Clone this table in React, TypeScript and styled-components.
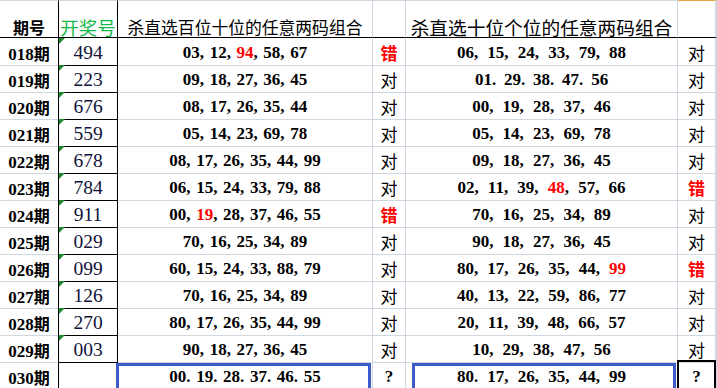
import React from "react";
import styled, { createGlobalStyle, css } from "styled-components";

const GRID = "#cfd7e3";
const NUM = '"Liberation Serif", "Noto Sans CJK SC", serif';
const CJK = '"Noto Sans CJK SC", "Liberation Serif", sans-serif';

const Global = createGlobalStyle`
  html, body { margin: 0; padding: 0; background: #fff; }
  body { overflow: hidden; }
`;

const Sheet = styled.div`
  width: 717px;
  height: 388px;
  overflow: hidden;
  background: #fff;
  color: #000;
`;

const COLS = "59px 59px 255px 33px 272px 38px 1fr";

const HeaderRow = styled.div`
  display: grid;
  grid-template-columns: ${COLS};
  height: 38px;
`;

const Row = styled.div<{ $tall?: boolean }>`
  display: grid;
  grid-template-columns: ${COLS};
  height: ${(p) => (p.$tall ? "40px" : "27px")};
`;

const HeadCell = styled.div<{ $dark?: boolean; $accent?: boolean }>`
  position: relative;
  box-sizing: border-box;
  display: flex;
  align-items: flex-end;
  justify-content: center;
  border-top: 1px solid ${(p) => (p.$accent ? "#f0a33c" : GRID)};
  border-bottom: 1px solid #000;
  border-right: 1px solid ${(p) => (p.$dark ? "#000" : GRID)};
  white-space: nowrap;
  overflow: visible;
`;

const HeadText = styled.span<{ $size: number; $bold?: boolean; $green?: boolean }>`
  font-family: ${CJK};
  font-size: ${(p) => p.$size}px;
  line-height: 20px;
  font-weight: ${(p) => (p.$bold ? 700 : 400)};
  color: ${(p) => (p.$green ? "#12b84a" : "#000")};
`;

const Cell = styled.div<{ $darkRight?: boolean; $darkBottom?: boolean }>`
  position: relative;
  box-sizing: border-box;
  display: flex;
  align-items: flex-start;
  justify-content: center;
  padding-top: 5px;
  border-right: 1px solid ${(p) => (p.$darkRight ? "#000" : GRID)};
  border-bottom: 1px solid ${(p) => (p.$darkBottom ? "#000" : GRID)};
  white-space: nowrap;
`;

const Label = styled.span`
  font-family: ${NUM};
  font-size: 17px;
  font-weight: 700;
  line-height: 20px;
  span {
    font-family: ${CJK};
    font-size: 16px;
  }
`;

const Draw = styled.span`
  font-family: ${NUM};
  font-size: 19.5px;
  line-height: 20px;
  color: #10123a;
`;

const Flag = styled.span`
  position: absolute;
  top: 0;
  left: 0;
  width: 0;
  height: 0;
  border-top: 6px solid #1f8a2e;
  border-right: 6px solid transparent;
`;

const Seq = styled.span`
  font-family: ${NUM};
  font-size: 17px;
  font-weight: 700;
  line-height: 20px;
  display: inline-flex;
`;

const Digits = styled.span<{ $red?: boolean }>`
  color: ${(p) => (p.$red ? "#ff0000" : "#000")};
`;

const Sep = styled.span<{ $w: number }>`
  display: inline-block;
  width: ${(p) => p.$w}em;
`;

const Mark = styled.span<{ $kind: "ok" | "bad" | "q" }>`
  line-height: 20px;
  ${(p) =>
    p.$kind === "q"
      ? css`
          font-family: ${NUM};
          font-size: 17px;
          font-weight: 700;
        `
      : css`
          font-family: ${CJK};
          font-size: 17px;
          font-weight: ${p.$kind === "bad" ? 700 : 400};
          color: ${p.$kind === "bad" ? "#ff0000" : "#000"};
        `}
`;

const Frame = styled.span<{ $l: number; $r: number; $t: number; $c: string; $w: number }>`
  position: absolute;
  left: ${(p) => p.$l}px;
  right: ${(p) => p.$r}px;
  top: ${(p) => p.$t}px;
  bottom: -12px;
  border: ${(p) => p.$w}px solid ${(p) => p.$c};
  pointer-events: none;
`;

type RowData = {
  no: string;
  draw: string;
  a: string;
  aRed?: string;
  aRes: "ok" | "bad" | "q";
  b: string;
  bRed?: string;
  bRes: "ok" | "bad" | "q";
  bSep?: number;
};

const rows: RowData[] = [
  { no: "018", draw: "494", a: "03,12,94,58,67", aRed: "94", aRes: "bad", b: "06,15,24,33,79,88", bRes: "ok" },
  { no: "019", draw: "223", a: "09,18,27,36,45", aRes: "ok", b: "01.29.38.47.56", bRes: "ok", bSep: 0.71 },
  { no: "020", draw: "676", a: "08,17,26,35,44", aRes: "ok", b: "00,19,28,37,46", bRes: "ok" },
  { no: "021", draw: "559", a: "05,14,23,69,78", aRes: "ok", b: "05,14,23,69,78", bRes: "ok" },
  { no: "022", draw: "678", a: "08,17,26,35,44,99", aRes: "ok", b: "09,18,27,36,45", bRes: "ok" },
  { no: "023", draw: "784", a: "06,15,24,33,79,88", aRes: "ok", b: "02,11,39,48,57,66", bRed: "48", bRes: "bad" },
  { no: "024", draw: "911", a: "00,19,28,37,46,55", aRed: "19", aRes: "bad", b: "70,16,25,34,89", bRes: "ok" },
  { no: "025", draw: "029", a: "70,16,25,34,89", aRes: "ok", b: "90,18,27,36,45", bRes: "ok" },
  { no: "026", draw: "099", a: "60,15,24,33,88,79", aRes: "ok", b: "80,17,26,35,44,99", bRed: "99", bRes: "bad" },
  { no: "027", draw: "126", a: "70,16,25,34,89", aRes: "ok", b: "40,13,22,59,86,77", bRes: "ok" },
  { no: "028", draw: "270", a: "80,17,26,35,44,99", aRes: "ok", b: "20,11,39,48,66,57", bRes: "ok" },
  { no: "029", draw: "003", a: "90,18,27,36,45", aRes: "ok", b: "10,29,38,47,56", bRes: "ok" },
  { no: "030", draw: "", a: "00.19.28.37.46.55", aRes: "q", b: "80.17,26,35,44,99", bRes: "q" },
];

function Numbers({ text, red, sep }: { text: string; red?: string; sep: number }) {
  const tokens = text.match(/\d+|[^\d]+/g) || [];
  return (
    <Seq>
      {tokens.map((t, i) =>
        /\d/.test(t) ? (
          <Digits key={i} $red={t === red}>
            {t}
          </Digits>
        ) : (
          <Sep key={i} $w={sep}>
            {t}
          </Sep>
        )
      )}
    </Seq>
  );
}

const markText = (k: "ok" | "bad" | "q") => (k === "ok" ? "对" : k === "bad" ? "错" : "?");

export default function App() {
  return (
    <>
      <Global />
      <Sheet>
        <HeaderRow>
          <HeadCell $dark>
            <HeadText $size={16} $bold>期号</HeadText>
          </HeadCell>
          <HeadCell $dark>
            <HeadText $size={18.5} $green>开奖号</HeadText>
          </HeadCell>
          <HeadCell>
            <HeadText $size={16.8}>杀直选百位十位的任意两码组合</HeadText>
          </HeadCell>
          <HeadCell />
          <HeadCell>
            <HeadText $size={18.7}>杀直选十位个位的任意两码组合</HeadText>
          </HeadCell>
          <HeadCell $accent />
          <HeadCell />
        </HeaderRow>
        {rows.map((r, idx) => {
          const last = idx === rows.length - 1;
          return (
            <Row key={r.no} $tall={last}>
              <Cell $darkRight>
                <Label>
                  {r.no}
                  <span>期</span>
                </Label>
              </Cell>
              <Cell $darkRight $darkBottom={!last}>
                {!last && <Flag />}
                <Draw>{r.draw}</Draw>
              </Cell>
              <Cell>
                <Numbers text={r.a} red={r.aRed} sep={0.58} />
                {last && <Frame $l={-2} $r={1} $t={1} $w={3} $c="#3a5bc8" />}
              </Cell>
              <Cell>
                <Mark $kind={r.aRes}>{markText(r.aRes)}</Mark>
              </Cell>
              <Cell>
                <Numbers text={r.b} red={r.bRed} sep={r.bSep ?? 0.79} />
                {last && <Frame $l={6} $r={1} $t={1} $w={3} $c="#3a5bc8" />}
              </Cell>
              <Cell>
                <Mark $kind={r.bRes}>{markText(r.bRes)}</Mark>
                {last && <Frame $l={-1} $r={-1} $t={-2} $w={2} $c="#000" />}
              </Cell>
              <Cell />
            </Row>
          );
        })}
      </Sheet>
    </>
  );
}
